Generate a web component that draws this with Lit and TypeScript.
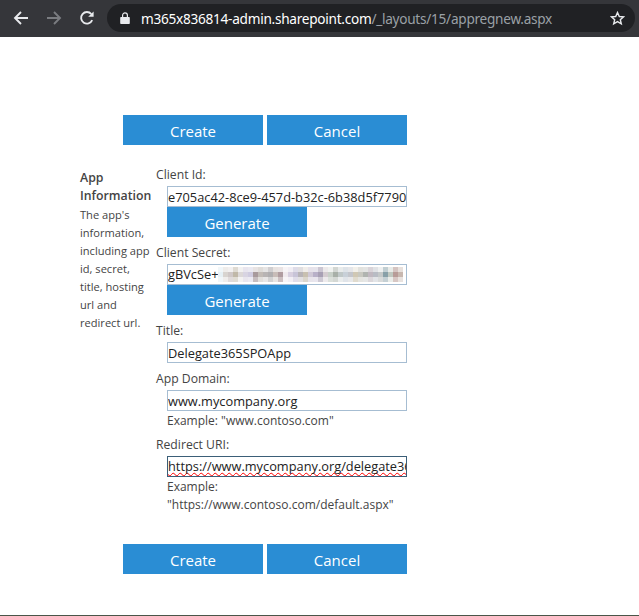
import { LitElement, html, css } from "lit";
import { customElement } from "lit/decorators.js";

const MID = [
  "#e6f0f5","#d8d4d0","#cfc8c8","#c0b8a8","#dcd8d8","#d8d4e2","#d0cce0","#a89a9c","#c2bbb6","#b8b4b4","#b0aeb0","#c8bcb8","#b09ca0",
  "#f0eaee","#d8d0e0","#c8c4d8","#b8b4b8","#c8c0b0","#cfc8d6","#b8b0c8","#a8a0b4","#d4ccd0","#c8d0c8","#a8b0a8","#c0c8c8","#c8d0d8",
  "#c4c6cc","#d0c8b4","#c8c8c0","#b0b4b0","#c0b8c0","#b8bcc4","#c4c8c8","#88a0a8","#c0c8c0","#b89c98","#c8b8b0",
];
const mix = (hex: string, t: number) => {
  const n = parseInt(hex.slice(1), 16);
  const ch = (v: number) => Math.round(v + (255 - v) * t);
  return `rgb(${ch(n >> 16)},${ch((n >> 8) & 255)},${ch(n & 255)})`;
};
const ROWS = [0.4, 0, 0.35];
const cellColor = (r: number, c: number) => {
  const wobble = ((c * 7 + r * 3) % 5) * 0.08;
  return mix(MID[c % MID.length], ROWS[r] === 0 ? 0 : Math.min(0.9, ROWS[r] + wobble));
};

@customElement("app-root")
export class AppRoot extends LitElement {
  static styles = css`
    :host { display: block; width: 639px; height: 616px; background: #fff; overflow: hidden; font-family: "Open Sans", "Noto Sans", sans-serif; color: #444; }
    .toolbar { height: 37px; background: #35363a; display: flex; align-items: center; box-sizing: border-box; padding: 0 4px 1px 13px; }
    .nav { display: flex; gap: 17px; align-items: center; width: 94px; flex: none; }
    .nav svg { display: block; flex: none; }
    .omni { flex: 1; height: 28px; background: #202124; border-radius: 14px; display: flex; align-items: center; padding: 0 10px 0 13px; }
    .url { margin-left: 11px; font-size: 13.63px; letter-spacing: -0.02em; color: #9aa0a6; flex: 1; white-space: nowrap; font-family: "Noto Sans", sans-serif; }
    .url b { font-weight: 400; color: #fff; }
    .page { height: 579px; box-sizing: border-box; padding: 78px 0 0 80px; border-bottom: 1px solid #4a5548; }
    .actions { display: flex; gap: 4px; margin-left: 43px; }
    button { border: 0; margin: 0; padding: 1px 0 0; background: #2a8dd4; color: #fff; font-family: inherit; font-size: 15px; height: 30px; width: 140px; text-align: center; }
    .form { display: flex; margin-top: 22px; }
    .side { width: 76px; flex: none; box-sizing: border-box; padding: 2px 3px 0 0; }
    .side h2 { margin: 0; font-size: 12.3px; line-height: 18px; font-weight: 600; color: #444; }
    .side p { margin: 1px 0 0; font-size: 11.1px; line-height: 18px; color: #444; }
    .fields { width: 251px; }
    label { display: block; font-size: 12.2px; line-height: 16px; color: #444; }
    .ctl { margin: 3px 0 0 11px; width: 240px; }
    .input, input { display: block; box-sizing: border-box; width: 240px; height: 21px; border: 1px solid #a6bdd2; background: #fff; padding: 0; margin: 0; font-family: inherit; font-size: 12.8px; color: #222; line-height: 19px; white-space: nowrap; overflow: hidden; outline: none; }
    .gen { width: 140px; display: block; }
    .focus { border-color: #3b5e78; }
    .squig { text-decoration: underline wavy #ff0000 1.3px; text-underline-offset: 1px; text-decoration-skip-ink: none; }
    .secret { display: flex; align-items: center; }
    .blur { display: grid; grid-template-columns: repeat(37, 5px); grid-auto-rows: 5px; flex: none; margin-left: -1px; }
    .blur i { display: block; }
    .hint { font-size: 12px; line-height: 18px; color: #444; margin: 1px 0 0; }
    .gap-a { margin-top: 8px; }
    .gap-b { margin-top: 7px; }
    .bottom { margin-top: 30px; }
  `;

  render() {
    return html`
      <div class="toolbar">
        <div class="nav">
          <svg width="16" height="16" viewBox="0 0 16 16" fill="none" stroke="#e8eaed" stroke-width="1.9"><path d="M15 8H2M8 2 2 8l6 6"/></svg>
          <svg width="16" height="16" viewBox="0 0 16 16" fill="none" stroke="#7a7c80" stroke-width="1.9"><path d="M1 8h13M8 2l6 6-6 6"/></svg>
          <svg width="16" height="16" viewBox="0 0 16 16" fill="none"><path d="M13.2 10.2A5.8 5.8 0 1 1 12.3 4" stroke="#e8eaed" stroke-width="1.9"/><path d="M14.6 1.4v5.4H9.2z" fill="#e8eaed"/></svg>
        </div>
        <div class="omni">
          <svg width="10" height="12" viewBox="0 0 10 12"><path d="M1 5h8a.8.8 0 0 1 .8.8v5.4a.8.8 0 0 1-.8.8H1a.8.8 0 0 1-.8-.8V5.800A.8.8 0 0 1 1 5z" fill="#e8eaed"/><path d="M2.600 5V3.300a2.400 2.400 0 0 1 4.800 0V5" fill="none" stroke="#e8eaed" stroke-width="1.200"/></svg>
          <span class="url"><b>m365x836814-admin.sharepoint.com</b>/_layouts/15/appregnew.aspx</span>
          <svg width="15" height="15" viewBox="0 0 15 15" fill="none" stroke="#e8eaed" stroke-width="1.400"><path d="M7.500 1.500l1.800 4 4.200.4-3.200 2.800 1 4.200-3.800-2.300-3.800 2.300 1-4.200L1.500 5.900l4.200-.4z"/></svg>
        </div>
      </div>
      <div class="page">
        <div class="actions"><button>Create</button><button>Cancel</button></div>
        <div class="form">
          <div class="side">
            <h2>App Information</h2>
            <p>The app's information, including app id, secret, title, hosting url and redirect url.</p>
          </div>
          <div class="fields">
            <label>Client Id:</label>
            <div class="ctl">
              <input readonly .value=${"e705ac42-8ce9-457d-b32c-6b38d5f7790"} />
              <button class="gen">Generate</button>
            </div>
            <label class="gap-a">Client Secret:</label>
            <div class="ctl">
              <div class="input secret">gBVcSe+<span class="blur">${ROWS.map((_, r) => MID.map((_c, c) => html`<i style="background:${cellColor(r, c)}"></i>`))}</span></div>
              <button class="gen">Generate</button>
            </div>
            <label class="gap-a">Title:</label>
            <div class="ctl"><input readonly .value=${"Delegate365SPOApp"} /></div>
            <label class="gap-a">App Domain:</label>
            <div class="ctl">
              <input readonly .value=${"www.mycompany.org"} />
              <p class="hint">Example: "www.contoso.com"</p>
            </div>
            <label class="gap-b">Redirect URI:</label>
            <div class="ctl">
              <div class="input focus"><span class="squig">https://www.mycompany.org/delegate365</span></div>
              <p class="hint">Example: "https://www.contoso.com/default.aspx"</p>
            </div>
          </div>
        </div>
        <div class="actions bottom"><button>Create</button><button>Cancel</button></div>
      </div>
    `;
  }
}
